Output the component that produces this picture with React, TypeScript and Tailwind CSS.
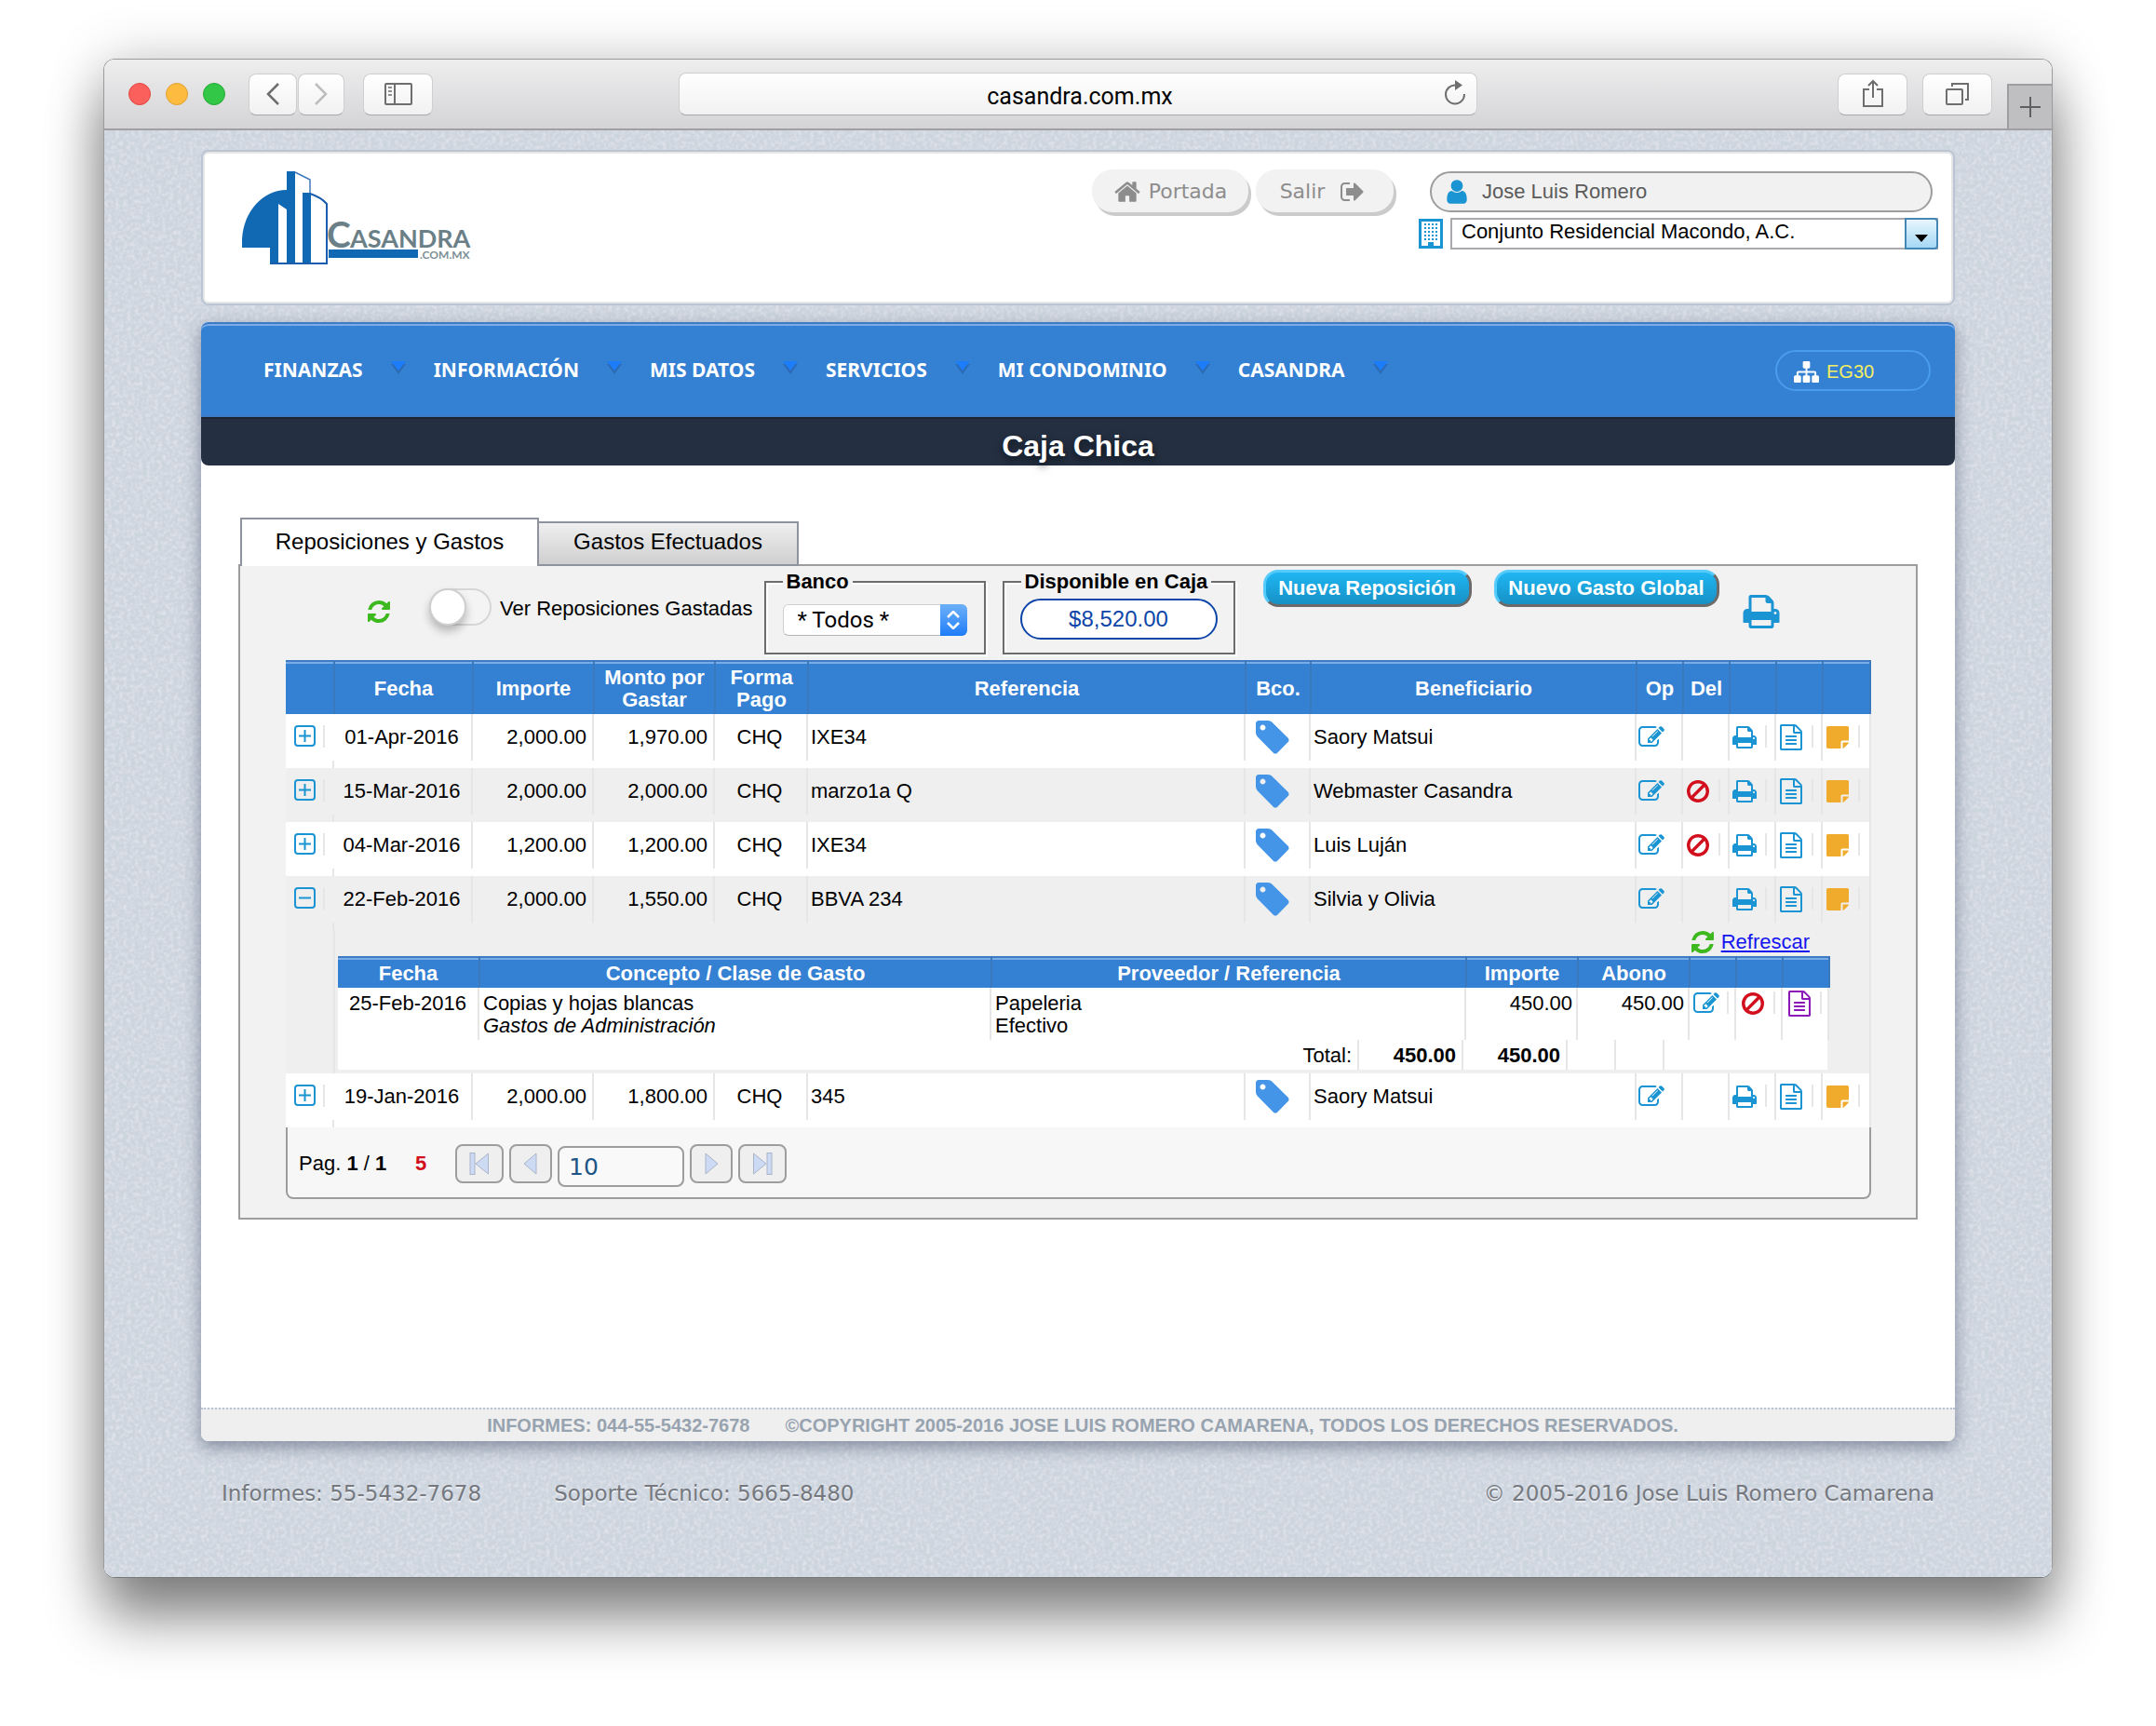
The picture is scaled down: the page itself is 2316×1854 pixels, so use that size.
import React from "react";

type IconProps = { d: string; className: string };

const Glyph = ({ d, className }: IconProps) => (
  <svg viewBox="0 0 1792 1792" fill="currentColor" aria-hidden="true" className={className}>
    <path d={d} />
  </svg>
);

const REFRESH =
  "M1639 1056q0 5-1 7-64 268-268 434.500t-478 166.500q-146 0-282.500-55t-243.500-157l-129 129q-19 19-45 19t-45-19-19-45v-448q0-26 19-45t45-19h448q26 0 45 19t19 45-19 45l-137 137q71 66 161 102t187 36q134 0 250-65t186-179q11-17 53-117 8-23 30-23h192q13 0 22.500 9.500t9.500 22.500zm25-800v448q0 26-19 45t-45 19h-448q-26 0-45-19t-19-45 19-45l138-138q-148-137-349-137-134 0-250 65t-186 179q-11 17-53 117-8 23-30 23h-199q-13 0-22.500-9.500t-9.500-22.500v-7q65-268 270-434.500t480-166.500q146 0 284 55.500t245 156.500l130-129q19-19 45-19t45 19 19 45z";
const PRINT =
  "M448 1536h896v-256h-896v256zm0-640h896v-384h-160q-40 0-68-28t-28-68v-160h-640v640zm1152 64q0-26-19-45t-45-19-45 19-19 45 19 45 45 19 45-19 19-45zm128 0v416q0 13-9.500 22.500t-22.500 9.500h-224v160q0 40-28 68t-68 28h-960q-40 0-68-28t-28-68v-160h-224q-13 0-22.500-9.500t-9.500-22.500v-416q0-79 56.500-135.500t135.500-56.500h64v-544q0-40 28-68t68-28h672q40 0 88 20t76 48l152 152q28 28 48 76t20 88v256h64q79 0 135.500 56.500t56.500 135.500z";
const FILE =
  "M1596 380q28 28 48 76t20 88v1152q0 40-28 68t-68 28h-1344q-40 0-68-28t-28-68v-1600q0-40 28-68t68-28h896q40 0 88 20t76 48zm-444-244v376h376q-10-29-22-41l-313-313q-12-12-41-22zm384 1528v-1024h-416q-40 0-68-28t-28-68v-416h-768v1536h1280zm-1024-864q0-14 9-23t23-9h704q14 0 23 9t9 23v64q0 14-9 23t-23 9h-704q-14 0-23-9t-9-23v-64zm736 224q14 0 23 9t9 23v64q0 14-9 23t-23 9h-704q-14 0-23-9t-9-23v-64q0-14 9-23t23-9h704zm0 256q14 0 23 9t9 23v64q0 14-9 23t-23 9h-704q-14 0-23-9t-9-23v-64q0-14 9-23t23-9h704z";
const EDIT =
  "M888 1184l116-116-152-152-116 116v56h96v96h56zm440-720q-16-16-33 1l-350 350q-17 17-1 33t33-1l350-350q17-17 1-33zm80 594v190q0 119-84.500 203.500t-203.500 84.500h-832q-119 0-203.500-84.500t-84.500-203.500v-832q0-119 84.500-203.500t203.500-84.500h832q63 0 117 25 15 7 18 23 3 17-9 29l-49 49q-14 14-32 8-23-6-45-6h-832q-66 0-113 47t-47 113v832q0 66 47 113t113 47h832q66 0 113-47t47-113v-126q0-13 9-22l64-64q15-15 35-7t20 29zm-96-738l288 288-672 672h-288v-288zm444 132l-92 92-288-288 92-92q28-28 68-28t68 28l152 152q28 28 28 68t-28 68z";
const BAN =
  "M1440 893q0-161-87-295l-754 753q137 89 297 89 111 0 211.500-43.500t173.500-116.500 116-174.500 43-212.500zm-999 299l755-754q-135-91-300-91-148 0-273 73t-198 199-73 274q0 162 89 299zm1223-299q0 157-61 300t-163.500 246-245 164-298.500 61-298.500-61-245-164-163.500-246-61-300 61-299.500 163.500-245.500 245-164 298.500-61 298.500 61 245 164 163.500 245.500 61 299.500z";
const TAG =
  "M576 448q0-53-37.500-90.500t-90.500-37.500-90.500 37.500-37.500 90.500 37.500 90.500 90.500 37.500 90.500-37.500 37.500-90.500zm1067 576q0 53-37 90l-491 492q-39 37-91 37-53 0-90-37l-715-716q-38-37-64.500-101t-26.500-117v-416q0-52 38-90t90-38h416q53 0 117 26.500t102 64.500l715 714q37 39 37 91z";
const HOME =
  "M1472 992v480q0 26-19 45t-45 19h-384v-384h-256v384h-384q-26 0-45-19t-19-45v-480q0-1 .5-3t.5-3l575-474 575 474q1 2 1 6zm223-69l-62 74q-8 9-21 11h-3q-13 0-21-7l-692-577-692 577q-12 8-24 7-13-2-21-11l-62-74q-8-10-7-23.500t11-21.500l719-599q32-26 76-26t76 26l244 204v-195q0-14 9-23t23-9h192q14 0 23 9t9 23v408l219 182q10 8 11 21.500t-7 23.500z";
const SIGN_OUT =
  "M704 1440q0 4 1 20t.5 26.500-3 23.500-10 19.500-20.500 6.500h-320q-119 0-203.500-84.500t-84.500-203.500v-704q0-119 84.500-203.500t203.500-84.500h320q13 0 22.500 9.500t9.500 22.500q0 4 1 20t.5 26.500-3 23.500-10 19.500-20.500 6.500h-320q-66 0-113 47t-47 113v704q0 66 47 113t113 47h312l11.500 1 11.500 3 8 5.500 7 9 2 13.500zm928-544q0 26-19 45l-544 544q-19 19-45 19t-45-19-19-45v-288h-448q-26 0-45-19t-19-45v-384q0-26 19-45t45-19h448v-288q0-26 19-45t45-19 45 19l544 544q19 19 19 45z";
const USER =
  "M1536 1399q0 109-62.500 187t-150.500 78h-854q-88 0-150.500-78t-62.500-187q0-85 8.500-160.500t31.500-152 58.500-131 94-89 134.500-34.500q131 128 313 128t313-128q76 0 134.500 34.500t94 89 58.500 131 31.500 152 8.500 160.500zm-256-887q0 159-112.500 271.500t-271.500 112.500-271.500-112.500-112.500-271.500 112.500-271.500 271.500-112.500 271.500 112.500 112.500 271.500z";
const SITEMAP =
  "M1792 1248v320q0 40-28 68t-68 28h-320q-40 0-68-28t-28-68v-320q0-40 28-68t68-28h96v-192h-512v192h96q40 0 68 28t28 68v320q0 40-28 68t-68 28h-320q-40 0-68-28t-28-68v-320q0-40 28-68t68-28h96v-192h-512v192h96q40 0 68 28t28 68v320q0 40-28 68t-68 28h-320q-40 0-68-28t-28-68v-320q0-40 28-68t68-28h96v-192q0-52 38-90t90-38h512v-192h-96q-40 0-68-28t-28-68v-320q0-40 28-68t68-28h320q40 0 68 28t28 68v320q0 40-28 68t-68 28h-96v192h512q52 0 90 38t38 90v192h96q40 0 68 28t28 68z";
const NOTE =
  "M1216 1120q-40 0-68 28t-28 68v448h-896q-40 0-68-28t-28-68v-1344q0-40 28-68t68-28h1344q40 0 68 28t28 68v896h-448zm32 128h412q-12 60-48 96l-220 220q-36 40-144 96v-412z";

const Building = () => (
  <svg viewBox="0 0 26 32" aria-hidden="true" className="h-8 w-[26px] shrink-0 text-[#1a94d2]">
    <rect x="1.500" y="1.500" width="23" height="29" fill="#fff" stroke="currentColor" strokeWidth="3" />
    {[5, 9, 13, 17, 21].map((y) =>
      [5, 9, 13, 17].map((x) => <rect key={x + "-" + y} x={x + 1} y={y} width="2" height="2" fill="currentColor" />)
    )}
    <rect x="10" y="25" width="6" height="6" fill="currentColor" />
  </svg>
);

const Logo = () => (
  <svg viewBox="0 0 260 100" role="img" aria-label="Casandra.com.mx" className="h-[100px] w-[260px]">
    <path d="M0 82V74C1 44 22 20 48 20V0H57V100H30V82Z" fill="#1168b3" />
    <path d="M39 35L48 41V98H39Z" fill="#fff" />
    <path d="M65 23H74V100H65Z" fill="#1168b3" />
    <path d="M57 1L73 9V23" fill="none" stroke="#3f77bb" strokeWidth="1.500" />
    <path d="M73 24Q85 28 91 35V98" fill="none" stroke="#1a5cae" strokeWidth="2" />
    <path d="M30 99H92" stroke="#1a5cae" strokeWidth="2" />
    <rect x="93" y="84" width="96" height="9" fill="#1168b3" />
    <text x="91" y="82" fill="#6b7f87" fontFamily="Lato, sans-serif" fontWeight="700" fontSize="39">
      C
    </text>
    <text x="116" y="82" fill="#6b7f87" fontFamily="Lato, sans-serif" fontWeight="700" fontSize="27">
      ASANDRA
    </text>
    <text x="191" y="94" fill="#7c8e95" fontFamily="Lato, sans-serif" fontSize="12" fontWeight="700">
      .COM.MX
    </text>
  </svg>
);

const Texture = () => (
  <svg aria-hidden="true" className="pointer-events-none absolute inset-0 h-full w-full">
    <filter id="paper">
      <feTurbulence type="fractalNoise" baseFrequency="0.24" numOctaves="3" seed="4" />
      <feColorMatrix values="0 0 0 0 0.87  0 0 0 0 0.86  0 0 0 0 0.9  1.2 0 0 0 -0.45" />
    </filter>
    <rect width="100%" height="100%" filter="url(#paper)" />
  </svg>
);

const chromeButton =
  "flex h-[45px] items-center justify-center rounded-lg border border-[#cfcfd1] border-b-[#a8a8aa] bg-linear-to-b from-white to-[#f1f1f1] text-[#6e6e6e]";

const BrowserBar = () => (
  <div className="grid h-[76px] grid-cols-[1fr_41%_1fr] items-center border-b-2 border-[#a09fa2] bg-linear-to-b from-[#eeeeef] to-[#d4d3d5]">
    <div className="flex items-center pl-[26px]">
      <div className="flex gap-4">
        <span className="size-6 rounded-full border border-[#e2463f] bg-[#fc605c]" />
        <span className="size-6 rounded-full border border-[#e0a032] bg-[#fdbc40]" />
        <span className="size-6 rounded-full border border-[#24a936] bg-[#33c748]" />
      </div>
      <div className="ml-[25px] flex gap-px">
        <button aria-label="Atrás" className={chromeButton + " w-[52px]"}>
          <svg viewBox="0 0 16 24" className="h-6 w-4" fill="none" stroke="currentColor" strokeWidth="2.500">
            <path d="M14 1L3 12l11 11" />
          </svg>
        </button>
        <button aria-label="Adelante" className={chromeButton + " w-[50px]"}>
          <svg viewBox="0 0 16 24" className="h-6 w-4 text-[#bdbdbd]" fill="none" stroke="currentColor" strokeWidth="2.500">
            <path d="M2 1l11 11L2 23" />
          </svg>
        </button>
      </div>
      <button aria-label="Barra lateral" className={chromeButton + " ml-5 w-[75px]"}>
        <svg viewBox="0 0 30 24" className="h-6 w-[30px]" fill="none" stroke="currentColor" strokeWidth="2">
          <rect x="1" y="1" width="28" height="22" rx="1" />
          <path d="M11 1v22" />
          <path d="M4 5h4M4 9h4M4 13h4" strokeWidth="1.500" />
        </svg>
      </button>
    </div>
    <div className="relative">
      <input
        aria-label="Dirección"
        defaultValue="casandra.com.mx"
        className="block h-[46px] w-full rounded-lg border border-[#cfcfd1] border-b-[#a8a8aa] bg-linear-to-b from-white to-[#f1f1f1] pt-1 pl-1 text-center font-[Roboto,sans-serif] text-[25px] text-black"
      />
      <button aria-label="Recargar" className="absolute top-2 right-3 text-[#6e6e6e]">
        <svg viewBox="0 0 24 28" className="h-7 w-6" fill="none" stroke="currentColor" strokeWidth="2">
          <path d="M13 5.500A10 10 0 1 0 22 15" />
          <path d="M12 0v11l8-5.500z" fill="currentColor" stroke="none" />
        </svg>
      </button>
    </div>
    <div className="flex h-full items-center justify-end gap-4">
      <button aria-label="Compartir" className={chromeButton + " w-[75px]"}>
        <svg viewBox="0 0 24 32" className="h-8 w-6" fill="none" stroke="currentColor" strokeWidth="2">
          <path d="M8 11H2v18h20V11h-6M12 20V2M7 7l5-5 5 5" />
        </svg>
      </button>
      <button aria-label="Pestañas" className={chromeButton + " w-[75px]"}>
        <svg viewBox="0 0 26 26" className="size-[26px]" fill="none" stroke="currentColor" strokeWidth="2">
          <rect x="1" y="8" width="17" height="16" rx="1" />
          <path d="M7 5V2h17v17h-3" />
        </svg>
      </button>
      <button
        aria-label="Nueva pestaña"
        className="flex h-12 w-12 items-center justify-center self-end border-t-2 border-l-2 border-[#9e9da0] bg-[#bfbec0] text-[#5f5f5f]"
      >
        <svg viewBox="0 0 24 24" className="size-6" stroke="currentColor" strokeWidth="2">
          <path d="M12 1v22M1 12h22" />
        </svg>
      </button>
    </div>
  </div>
);

const pill =
  "flex h-[46px] items-center gap-2 rounded-[22px] bg-[#f2f2f2] pt-0.5 font-['DejaVu_Sans',sans-serif] text-[22px] text-[#8d8d8d] shadow-[3px_4px_0_#cbcbcb]";

const Header = () => (
  <header className="flex h-[167px] justify-between rounded-lg border-2 border-[#bac4d3] bg-white p-2 shadow-[inset_0_0_0_2px_#e6e6e7]">
    <div className="pt-[13px] pl-[34px]">
      <Logo />
    </div>
    <div className="flex items-start pt-[11px] pr-2">
      <button className={pill + " w-[168px] justify-center"}>
        <Glyph d={HOME} className="size-[30px]" />
        Portada
      </button>
      <button className={pill + " ml-2 w-[148px] justify-center gap-4 pr-1"}>
        Salir
        <Glyph d={SIGN_OUT} className="size-7" />
      </button>
      <div className="ml-[27px] flex w-[558px] flex-col pt-0.5">
        <div className="mr-[6px] ml-3 flex h-11 items-center gap-3 rounded-full border-2 border-[#9d9d9d] bg-[#f1f1f1] pl-3 text-[22px] text-[#5b5b5b]">
          <Glyph d={USER} className="size-[30px] text-[#1a94d2]" />
          Jose Luis Romero
        </div>
        <div className="mt-[6px] flex items-center gap-2">
          <Building />
          <div className="relative flex-1">
            <select
              aria-label="Condominio"
              className="block h-[34px] w-full appearance-none border-2 border-[#a9a9ae] bg-white pr-10 pb-1 pl-2.5 text-[22px] leading-6 text-black"
            >
              <option>Conjunto Residencial Macondo, A.C.</option>
            </select>
            <span className="pointer-events-none absolute inset-y-0 right-0 flex w-9 items-end justify-center rounded-r border-2 border-[#4586b4] bg-linear-to-b from-[#e8f5fd] to-[#a5d8f5] pb-1.5">
              <svg viewBox="0 0 14 8" className="h-2 w-3.5">
                <path d="M0 0h14l-7 8z" fill="#000" />
              </svg>
            </span>
          </div>
        </div>
      </div>
    </div>
  </header>
);

const menu = ["FINANZAS", "INFORMACIÓN", "MIS DATOS", "SERVICIOS", "MI CONDOMINIO", "CASANDRA"];

const Nav = () => (
  <nav className="flex h-[102px] items-center justify-between rounded-t-lg border-t-2 border-b-2 border-[#3d7cc4] bg-[#3480d3] pr-[26px] pl-[67px] shadow-[inset_0_2px_0_#7aade8]">
    <ul className="flex">
      {menu.map((item) => (
        <li key={item} className="flex items-center">
          <a href="#" className="font-['Noto_Sans',sans-serif] text-[21px] leading-7 font-bold text-white">
            {item}
          </a>
          <svg viewBox="0 0 16 14" className="mr-[30px] mb-1 ml-[30px] h-3.5 w-4">
            <path d="M0 3h16l-8 11z" fill="#2c6bb5" />
            <path d="M0 0h16l-8 10z" fill="#1c7dfa" />
          </svg>
        </li>
      ))}
    </ul>
    <button className="mt-0.5 flex h-11 w-[167px] items-center gap-2 rounded-full border-2 border-[#4a9cec] pt-0.5 pl-[18px] text-[20px] text-[#f4ee62]">
      <Glyph d={SITEMAP} className="size-[27px] text-white" />
      EG30
    </button>
  </nav>
);

const link = "text-[#1a94d2]";

const Toggle = ({ open }: { open: boolean }) => (
  <button aria-label={open ? "Contraer" : "Expandir"} className={"mt-3 ml-[9px] size-[23px] " + link}>
    <svg viewBox="0 0 23 23" className="size-[23px]" fill="none" stroke="currentColor" strokeWidth="2">
      <rect x="1" y="1" width="21" height="21" rx="3" />
      <path d={open ? "M5 11.500h13" : "M5 11.500h13M11.500 5v13"} />
    </svg>
  </button>
);

const Action = ({ d, label, color, tick }: { d: string; label: string; color: string; tick?: boolean }) => (
  <div className="flex items-start pl-0.5">
    <button aria-label={label} className={"size-7 " + color}>
      <Glyph d={d} className="size-7" />
    </button>
    {tick && <span className="mt-px ml-2 h-6 w-0.5 bg-[#e6e6e6]" />}
  </div>
);

type Row = { date: string; amount: string; left: string; method: string; ref: string; who: string; del: boolean; open: boolean };

const rows: Row[] = [
  { date: "01-Apr-2016", amount: "2,000.00", left: "1,970.00", method: "CHQ", ref: "IXE34", who: "Saory Matsui", del: false, open: false },
  { date: "15-Mar-2016", amount: "2,000.00", left: "2,000.00", method: "CHQ", ref: "marzo1a Q", who: "Webmaster Casandra", del: true, open: false },
  { date: "04-Mar-2016", amount: "1,200.00", left: "1,200.00", method: "CHQ", ref: "IXE34", who: "Luis Luján", del: true, open: false },
  { date: "22-Feb-2016", amount: "2,000.00", left: "1,550.00", method: "CHQ", ref: "BBVA 234", who: "Silvia y Olivia", del: false, open: true },
  { date: "19-Jan-2016", amount: "2,000.00", left: "1,800.00", method: "CHQ", ref: "345", who: "Saory Matsui", del: false, open: false },
];

const Th = ({ children }: { children?: React.ReactNode }) => (
  <th scope="col" className="border-r-2 border-[#3b79bf] bg-[#3480d3] px-0 pt-[3px] pb-0 font-bold shadow-[inset_0_2px_0_#3d7cc4,inset_0_4px_0_#7aade8]">
    {children}
  </th>
);

const cell = "h-[50px] border-r-2 border-[#e6e6e6] pt-[13px]";
const iconCell = "h-[50px] border-r-2 border-[#e6e6e6] pt-[11px]";

const MainRow = ({ row, striped }: { row: Row; striped: boolean }) => (
  <tr className={striped ? "bg-[#efefef] align-top" : "bg-white align-top"}>
    <td className="h-[58px] p-0">
      <div className="flex h-[50px] items-start">
        <Toggle open={row.open} />
        <span className="mt-3 ml-2 h-6 w-0.5 bg-[#e6e6e6]" />
      </div>
      <div className="h-2 border-r-2 border-[#e6e6e6]" />
    </td>
    <td className="p-0 text-center">
      <div className={cell + " pr-0.5"}>{row.date}</div>
    </td>
    <td className="p-0 text-right">
      <div className={cell + " pr-1.5"}>{row.amount}</div>
    </td>
    <td className="p-0 text-right">
      <div className={cell + " pr-1.5"}>{row.left}</div>
    </td>
    <td className="p-0 text-center">
      <div className={cell + " pr-0.5"}>{row.method}</div>
    </td>
    <td className="p-0">
      <div className={cell + " pl-[3px]"}>{row.ref}</div>
    </td>
    <td className="p-0">
      <div className="h-[50px] border-r-2 border-[#e6e6e6] pt-1 pl-2">
        <Glyph d={TAG} className="size-[42px] text-[#4494e8]" />
      </div>
    </td>
    <td className="p-0">
      <div className={cell + " pl-[3px]"}>{row.who}</div>
    </td>
    <td className="p-0">
      <div className={iconCell}>
        <Action d={EDIT} label="Editar" color={link} />
      </div>
    </td>
    <td className="p-0">
      <div className={iconCell}>
        {row.del && <Action d={BAN} label="Eliminar" color="text-[#d20f1c]" tick />}
      </div>
    </td>
    <td className="p-0">
      <div className={iconCell}>
        <Action d={PRINT} label="Imprimir" color={link} tick />
      </div>
    </td>
    <td className="p-0">
      <div className={iconCell}>
        <Action d={FILE} label="Ver documento" color={link} tick />
      </div>
    </td>
    <td className="border-r-2 border-[#e6e6e6] px-0 pt-[11px] pb-0">
      <Action d={NOTE} label="Nota" color="text-[#f0ab2c]" tick />
    </td>
  </tr>
);

const subCell = "h-14 border-r-2 border-[#e6e6e6] pt-[5px]";
const subIcon = "h-14 border-r-2 border-[#e6e6e6] pt-[3px] pl-0.5";
const total = "h-8 border-r-2 border-[#e6e6e6]";

const Detail = () => (
  <tr className="bg-[#efefef] align-top">
    <td className="border-r-2 border-[#e6e6e6] p-0" />
    <td colSpan={12} className="border-r-2 border-[#e6e6e6] pt-0 pr-[42px] pb-1 pl-[3px]">
      <div className="flex h-7 items-center justify-end gap-1.5 pr-[22px] pb-0.5 text-[22px]">
        <Glyph d={REFRESH} className="size-7 text-[#3db91f]" />
        <a href="#" className="text-[#1515f0] underline">
          Refrescar
        </a>
      </div>
      <table className="w-full table-fixed border-collapse">
        <colgroup>
          <col className="w-[152px]" />
          <col />
          <col className="w-[510px]" />
          <col className="w-[120px]" />
          <col className="w-[120px]" />
          <col className="w-[50px]" />
          <col className="w-[50px]" />
          <col className="w-[50px]" />
        </colgroup>
        <thead>
          <tr className="h-[34px] text-white">
            <Th>Fecha</Th>
            <Th>Concepto / Clase de Gasto</Th>
            <Th>Proveedor / Referencia</Th>
            <Th>Importe</Th>
            <Th>Abono</Th>
            <Th />
            <Th />
            <Th />
          </tr>
        </thead>
        <tbody>
          <tr className="bg-white align-top">
            <td className="p-0 text-center">
              <div className={subCell}>25-Feb-2016</div>
            </td>
            <td className="p-0">
              <div className={subCell + " pl-1"}>
                Copias y hojas blancas
                <br />
                <em>Gastos de Administración</em>
              </div>
            </td>
            <td className="p-0">
              <div className={subCell + " pl-1"}>
                Papeleria
                <br />
                Efectivo
              </div>
            </td>
            <td className="p-0 text-right">
              <div className={subCell + " pr-1"}>450.00</div>
            </td>
            <td className="p-0 text-right">
              <div className={subCell + " pr-1"}>450.00</div>
            </td>
            <td className="p-0">
              <div className={subIcon}>
                <Action d={EDIT} label="Editar" color={link} tick />
              </div>
            </td>
            <td className="p-0">
              <div className={subIcon}>
                <Action d={BAN} label="Eliminar" color="text-[#d20f1c]" tick />
              </div>
            </td>
            <td className="p-0">
              <div className={subIcon}>
                <Action d={FILE} label="Ver documento" color="text-[#8b17b8]" tick />
              </div>
            </td>
          </tr>
        </tbody>
      </table>
      <div className="mr-[3px] flex h-8 items-center bg-white text-right">
        <div className={total + " flex-1 pt-[5px] pr-1.5"}>Total:</div>
        <div className={total + " w-28 pt-[5px] pr-1.5 font-bold"}>450.00</div>
        <div className={total + " w-28 pt-[5px] pr-1.5 font-bold"}>450.00</div>
        <div className={total + " w-[52px]"} />
        <div className={total + " w-[52px]"} />
        <div className="h-8 w-[175px]" />
      </div>
    </td>
  </tr>
);

const MainTable = () => (
  <table className="w-full table-fixed border-collapse">
    <colgroup>
      <col className="w-[52px]" />
      <col className="w-[149px]" />
      <col className="w-[130px]" />
      <col className="w-[130px]" />
      <col className="w-[100px]" />
      <col />
      <col className="w-[70px]" />
      <col className="w-[350px]" />
      <col className="w-[50px]" />
      <col className="w-[50px]" />
      <col className="w-[50px]" />
      <col className="w-[50px]" />
      <col className="w-[51px]" />
    </colgroup>
    <thead>
      <tr className="h-[58px] text-white">
        <Th />
        <Th>Fecha</Th>
        <Th>Importe</Th>
        <Th>
          Monto por
          <br />
          Gastar
        </Th>
        <Th>
          Forma
          <br />
          Pago
        </Th>
        <Th>Referencia</Th>
        <Th>Bco.</Th>
        <Th>Beneficiario</Th>
        <Th>Op</Th>
        <Th>Del</Th>
        <Th />
        <Th />
        <Th />
      </tr>
    </thead>
    <tbody>
      {rows.map((row, i) => (
        <React.Fragment key={row.date}>
          <MainRow row={row} striped={i % 2 === 1} />
          {row.open && <Detail />}
        </React.Fragment>
      ))}
    </tbody>
  </table>
);

const PageButton = ({ d, label, bar, width }: { d: string; label: string; bar?: number; width: string }) => (
  <button aria-label={label} className={"flex h-[42px] items-center justify-center rounded-lg border-2 border-[#9d9d9d] bg-[#efefef] " + width}>
    <svg viewBox="0 0 22 24" className="h-6 w-[22px]" fill="#cddaf3" stroke="#a9b4c9" strokeWidth="1">
      <path d={d} />
      {bar !== undefined && <rect x={bar} y="0.500" width="5" height="23" />}
    </svg>
  </button>
);

const Pager = () => (
  <div className="flex h-[77px] items-start rounded-b-lg border-x-2 border-b-2 border-[#9d9d9d] bg-[#f7f7f7] pt-[18px] pl-3">
    <p className="w-[125px] pt-[9px]">
      Pag. <b>1</b> / <b>1</b>
    </p>
    <b className="w-[43px] pt-[9px] text-[#d20f1c]">5</b>
    <div className="flex gap-1.5">
      <PageButton label="Primera" d="M20.500 1v22L7 12z" bar={1} width="w-[52px]" />
      <PageButton label="Anterior" d="M17 1v22L4 12z" width="w-[46px]" />
      <input
        aria-label="Registros por página"
        defaultValue="10"
        className="mt-0.5 h-11 w-[136px] rounded-lg border-2 border-[#9d9d9d] bg-[#f9f9f9] pl-2.5 font-['DejaVu_Sans',sans-serif] text-[25px] text-[#1d5587]"
      />
      <PageButton label="Siguiente" d="M5 1v22l13-11z" width="w-[46px]" />
      <PageButton label="Última" d="M1.500 1v22L15 12z" bar={16} width="w-[52px]" />
    </div>
  </div>
);

const box = "mt-[5px] h-[90px] border-2 border-[#6c6c6c] shadow-[2px_2px_0_#fff,inset_2px_2px_0_#fff]";
const legend = "ml-[18px] bg-[#f2f2f2] px-1 text-[22px] leading-6 font-bold text-black";
const blueButton =
  "mt-1 h-10 rounded-2xl border-[3px] border-t-[#55cbfb] border-r-[#6b6b6b] border-b-[#6b6b6b] border-l-[#55cbfb] bg-linear-to-b from-[#1fb6f2] to-[#1791c6] text-[22px] font-bold text-white";

const Controls = () => (
  <div className="flex h-[101px] items-start pl-[86px]">
    <button aria-label="Recargar reposiciones" className="mt-[35px] size-7 text-[#3db91f]">
      <Glyph d={REFRESH} className="size-7" />
    </button>
    <label className="mt-6 ml-10 flex items-center gap-[9px]">
      <span className="relative h-10 w-[67px]">
        <input type="checkbox" className="peer block h-10 w-[67px] appearance-none rounded-full border-2 border-[#d6d6d6] bg-[#f4f4f4]" />
        <span className="pointer-events-none absolute top-0 left-0 size-10 rounded-full border-2 border-[#cfcfcf] bg-white shadow-[0_6px_10px_rgba(0,0,0,0.25)] peer-checked:left-[27px]" />
      </span>
      <span className="pt-1">Ver Reposiciones Gastadas</span>
    </label>
    <fieldset className={box + " ml-3 w-[238px]"}>
      <legend className={legend}>Banco</legend>
      <div className="relative mx-auto mt-3 h-[34px] w-[198px]">
        <select
          aria-label="Banco"
          className="block h-[34px] w-full appearance-none rounded-md border border-[#d0d0d0] border-b-[#b5b5b5] bg-white pl-[15px] font-[Roboto,sans-serif] text-[24px] leading-7 text-black"
        >
          <option>* Todos *</option>
        </select>
        <span className="pointer-events-none absolute inset-y-0 right-0 flex w-[29px] items-center justify-center rounded-r-md bg-linear-to-b from-[#6cb0f8] to-[#1a7cf8]">
          <svg viewBox="0 0 14 20" className="h-5 w-3.5" fill="none" stroke="#fff" strokeWidth="2.500">
            <path d="M1 7l6-6 6 6M1 13l6 6 6-6" />
          </svg>
        </span>
      </div>
    </fieldset>
    <fieldset className={box + " ml-[18px] w-[250px]"}>
      <legend className={legend}>Disponible en Caja</legend>
      <div className="mx-auto mt-1.5 w-[212px]">
        <input
          aria-label="Disponible en Caja"
          readOnly
          value="$8,520.00"
          className="block h-11 w-full rounded-full border-2 border-[#0e45a8] bg-white text-center text-[24px] text-[#0e45a8]"
        />
      </div>
    </fieldset>
    <button className={blueButton + " ml-[30px] w-[224px]"}>Nueva Reposición</button>
    <button className={blueButton + " ml-6 w-[242px]"}>Nuevo Gasto Global</button>
    <button aria-label="Imprimir" className="mt-7 ml-6 size-[42px] text-[#1a94d2]">
      <Glyph d={PRINT} className="size-[42px]" />
    </button>
  </div>
);

const Tabs = () => (
  <div role="tablist" className="relative z-10 -mb-0.5 ml-0.5 flex items-end text-[24px] text-black">
    <button role="tab" aria-selected="true" className="h-[52px] w-[321px] border-2 border-b-0 border-[#8f939d] bg-white pb-0.5">
      Reposiciones y Gastos
    </button>
    <button
      role="tab"
      aria-selected="false"
      className="h-12 w-[279px] border-2 border-l-0 border-[#8f939d] bg-linear-to-b from-[#efefef] to-[#cfcfcf] pb-1"
    >
      Gastos Efectuados
    </button>
  </div>
);

export default function App() {
  return (
    <div className="bg-white px-[111px] pt-[63px] pb-40 font-['Liberation_Sans',Arial,sans-serif] text-[22px] leading-6 text-black">
      <div className="overflow-hidden rounded-xl border border-[#9b9b9d] border-b-[#77787b] shadow-[0_44px_60px_rgba(0,0,0,0.45),0_0_60px_rgba(0,0,0,0.2)]">
        <BrowserBar />
        <div className="relative bg-[#ccd4de]">
          <Texture />
          <div className="relative px-[104px] pt-[21px] pb-[78px]">
            <Header />
            <main className="mt-[18px] rounded-lg bg-white shadow-[0_6px_18px_rgba(50,60,90,0.5)]">
              <Nav />
              <h1 className="h-[52px] rounded-b-lg border-t-2 border-[#1b242f] bg-[#242f41] pt-[11px] text-center text-[32px] leading-9 font-bold text-white [text-shadow:0_4px_8px_rgba(0,0,0,0.6)]">
                Caja Chica
              </h1>
              <section className="px-10 pt-14 pb-[202px]">
                <Tabs />
                <div className="border-2 border-[#9d9d9d] bg-[#f2f2f2] pr-12 pb-5 pl-[49px]">
                  <Controls />
                  <MainTable />
                  <Pager />
                </div>
              </section>
              <div className="flex h-9 items-center justify-center gap-[38px] rounded-b-lg border-t-2 border-dotted border-[#b9c3d3] bg-[#efefef] pl-2.5 text-[20px] font-bold text-[#98a3b0]">
                <span>INFORMES: 044-55-5432-7678</span>
                <span>©COPYRIGHT 2005-2016 JOSE LUIS ROMERO CAMARENA, TODOS LOS DERECHOS RESERVADOS.</span>
              </div>
            </main>
            <footer className="mt-11 flex justify-between px-[22px] font-['DejaVu_Sans',sans-serif] text-[23px] text-[#75797f] [text-shadow:0_2px_0_#e9edf2]">
              <div className="flex gap-[78px]">
                <span>Informes: 55-5432-7678</span>
                <span>Soporte Técnico: 5665-8480</span>
              </div>
              <span>© 2005-2016 Jose Luis Romero Camarena</span>
            </footer>
          </div>
        </div>
      </div>
    </div>
  );
}
